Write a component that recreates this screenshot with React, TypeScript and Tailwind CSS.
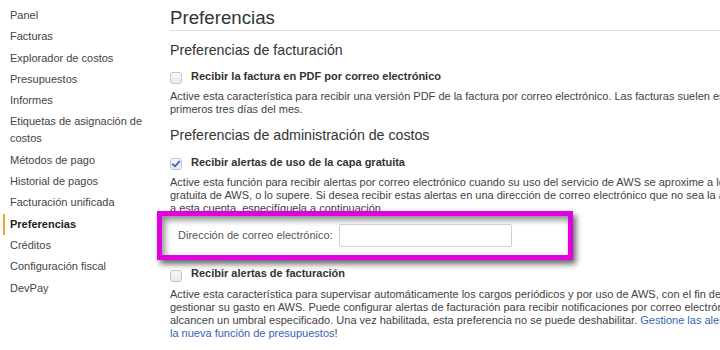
import React from 'react';

const navItems = [
  'Panel',
  'Facturas',
  'Explorador de costos',
  'Presupuestos',
  'Informes',
  'Etiquetas de asignación de costos',
  'Métodos de pago',
  'Historial de pagos',
  'Facturación unificada',
  'Preferencias',
  'Créditos',
  'Configuración fiscal',
  'DevPay',
];

function Checkbox({ checked }: { checked?: boolean }) {
  return (
    <span className="mt-[3.5px] flex h-[12px] w-[12px] shrink-0 items-center justify-center rounded-[3px] border border-[#c4c4c4] bg-gradient-to-b from-[#fafafa] to-[#e9e9e9]">
      {checked ? (
        <svg width="10" height="10" viewBox="0 0 10 10">
          <path d="M1.6 5.2 L4 7.4 L8.5 2.4" fill="none" stroke="#2f6cc0" strokeWidth="1.8" strokeLinecap="round" strokeLinejoin="round" />
        </svg>
      ) : null}
    </span>
  );
}

function OptionRow({ label, checked, className }: { label: string; checked?: boolean; className: string }) {
  return (
    <div className={`flex items-start gap-[9px] ${className}`}>
      <Checkbox checked={checked} />
      <span className="whitespace-nowrap text-[11px] font-bold leading-[14px] text-[#333]">{label}</span>
    </div>
  );
}

function Paragraph({ lines, className }: { lines: React.ReactNode[]; className: string }) {
  return (
    <div className={`text-[11px] leading-[13px] text-[#3f3f3f] ${className}`}>
      {lines.map((line, i) => (
        <div key={i} className="whitespace-nowrap">
          {line}
        </div>
      ))}
    </div>
  );
}

export default function App() {
  return (
    <div className="flex h-[350px] w-[720px] overflow-hidden bg-white" style={{ fontFamily: '"Liberation Sans", Arial, sans-serif' }}>
      <aside className="relative w-[160px] shrink-0 pl-[10px] pt-[7px]">
        <nav className="flex w-[140px] flex-col gap-[4.3px]">
          {navItems.map((item) => {
            const active = item === 'Preferencias';
            return (
              <div key={item} className="relative">
                {active ? <span className="absolute -left-[7px] top-[-1.5px] h-[21px] w-[2px] bg-[#f0a232]" /> : null}
                <span className={`block text-[11px] leading-[17px] ${active ? 'font-bold text-[#222]' : 'text-[#444]'}`}>{item}</span>
              </div>
            );
          })}
        </nav>
      </aside>

      <main className="min-w-0 flex-1 pl-[10px] pt-[7px]">
        <h1 className="border-b border-[#dedede] pb-[1px] text-[18.7px] font-normal leading-[22px] text-[#333]">Preferencias</h1>

        <h2 className="mt-[10.4px] text-[14.2px] font-normal leading-[18px] text-[#333]">Preferencias de facturación</h2>
        <OptionRow className="mt-[9.2px]" label="Recibir la factura en PDF por correo electrónico" />
        <Paragraph
          className="mt-[6px]"
          lines={[
            'Active esta característica para recibir una versión PDF de la factura por correo electrónico. Las facturas suelen estar disponibles en los',
            'primeros tres días del mes.',
          ]}
        />

        <h2 className="mt-[10.3px] text-[14.2px] font-normal leading-[18px] text-[#333]">Preferencias de administración de costos</h2>
        <OptionRow className="mt-[10.5px]" checked label="Recibir alertas de uso de la capa gratuita" />
        <Paragraph
          className="mt-[5.6px]"
          lines={[
            'Active esta función para recibir alertas por correo electrónico cuando su uso del servicio de AWS se aproxime a los límites de la capa',
            'gratuita de AWS, o lo supere. Si desea recibir estas alertas en una dirección de correo electrónico que no sea la asociada',
            'a esta cuenta, especifíquela a continuación.',
          ]}
        />

        <div className="relative z-10 -ml-[13px] -mt-[4px] flex h-[49px] w-[416px] items-center border-[5px] border-[#e000e0] pl-[16px] shadow-[3px_4px_6px_rgba(0,0,0,0.6),inset_3px_4px_6px_rgba(0,0,0,0.45)]">
          <span className="w-[161px] shrink-0 whitespace-nowrap text-[11px] text-[#555]">Dirección de correo electrónico:</span>
          <span className="h-[23px] w-[173px] rounded-[2px] border border-[#cfcfcf] bg-white" />
        </div>

        <OptionRow className="mt-[6.5px]" label="Recibir alertas de facturación" />
        <Paragraph
          className="mt-[6.5px]"
          lines={[
            'Active esta característica para supervisar automáticamente los cargos periódicos y por uso de AWS, con el fin de facilitar la tarea de',
            'gestionar su gasto en AWS. Puede configurar alertas de facturación para recibir notificaciones por correo electrónico cuando sus cargos',
            <>
              alcancen un umbral especificado. Una vez habilitada, esta preferencia no se puede deshabilitar.{' '}
              <span className="text-[#3463b3]">Gestione las alertas de facturación y cree otras nuevas con</span>
            </>,
            <>
              <span className="text-[#3463b3]">la nueva función de presupuestos</span>!
            </>,
          ]}
        />
      </main>
    </div>
  );
}
